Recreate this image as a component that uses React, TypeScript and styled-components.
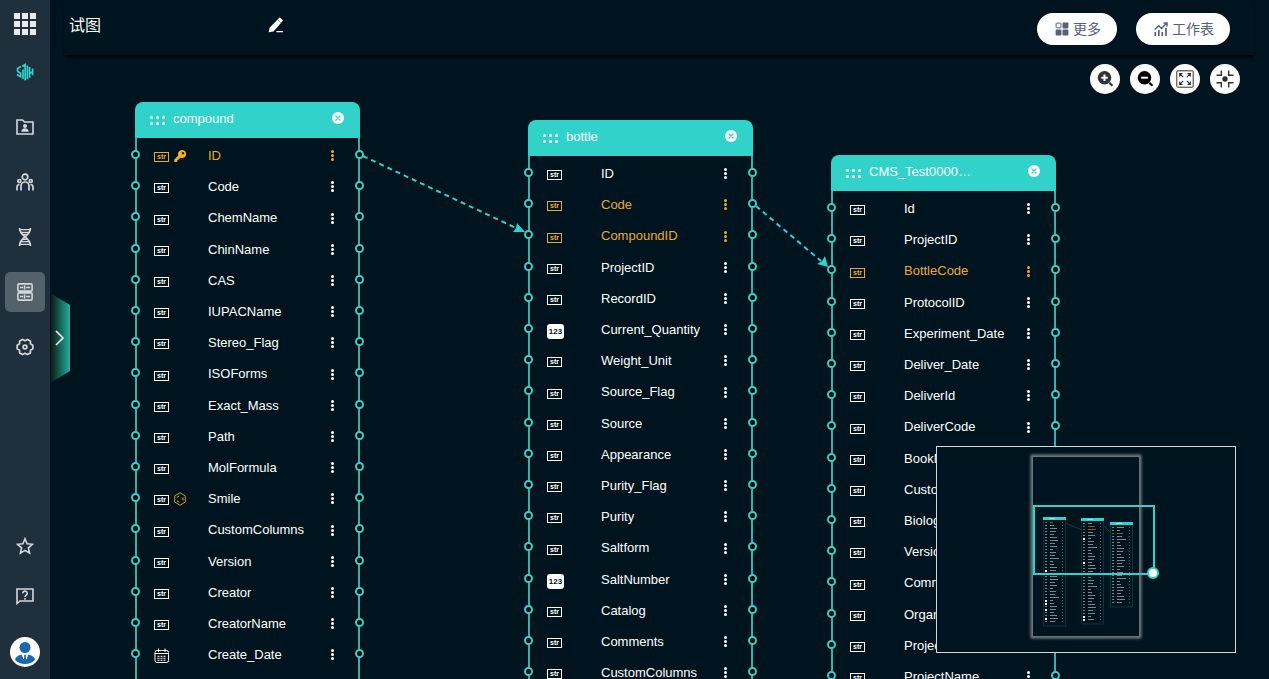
import React from "react";
import styled, { createGlobalStyle, css } from "styled-components";

const teal = "#30d2c9";
const ink = "#001420";
const amber = "#eea92c";

const GlobalStyle = createGlobalStyle`
  * { box-sizing: border-box; }
  html, body, #root { height: 100%; }
  body {
    margin: 0;
    background: ${ink};
    color: #fff;
    font-family: "Liberation Sans", Arial, "Noto Sans CJK SC", sans-serif;
    font-size: 13px;
    overflow: hidden;
  }
  button { font: inherit; color: inherit; border: 0; padding: 0; background: none; cursor: pointer; }
  ul { list-style: none; margin: 0; padding: 0; }
  svg { display: block; }
`;

const Shell = styled.div`
  display: flex;
  height: 100%;
`;

const Sidebar = styled.aside`
  flex: none;
  width: 50px;
  height: 100%;
  padding: 11px 0 12px;
  display: flex;
  flex-direction: column;
  justify-content: space-between;
  align-items: center;
  background: #1f2f3b;
`;

const Nav = styled.nav<{ $gap: number }>`
  display: flex;
  flex-direction: column;
  align-items: center;
  gap: ${(p) => p.$gap}px;
`;

const AppsButton = styled.button`
  display: grid;
  place-items: center;
  width: 40px;
  height: 26px;
`;

const NavButton = styled.button<{ $active?: boolean }>`
  display: grid;
  place-items: center;
  width: 40px;
  height: 40px;
  border-radius: 5px;
  color: #d5d9dc;
  background: ${(p) => (p.$active ? "#53616a" : "transparent")};
`;

const Avatar = styled.button`
  width: 30px;
  height: 30px;
  margin-top: 11px;
  border-radius: 50%;
  overflow: hidden;
  background: #fff;
`;

const Main = styled.main`
  position: relative;
  flex: 1;
  min-width: 0;
  display: flex;
  flex-direction: column;
`;

const Header = styled.header`
  flex: none;
  height: 55px;
  margin: 0 14px;
  padding: 2px 25px 0 5px;
  display: flex;
  align-items: center;
  box-shadow: 0 3px 3px -1px #000;
`;

const Title = styled.h1`
  margin: 0;
  width: 199px;
  padding-bottom: 6px;
  font-size: 16px;
  line-height: 24px;
  font-weight: 400;
`;

const EditButton = styled.button`
  width: 16px;
  height: 24px;
  margin-bottom: 8px;
  display: grid;
  place-items: center;
`;

const Actions = styled.div`
  margin-left: auto;
  display: flex;
  gap: 19px;
`;

const PillButton = styled.button`
  display: flex;
  align-items: center;
  gap: 4px;
  height: 32px;
  padding: 1px 16px 0 18px;
  border-radius: 16px;
  background: #fff;
  color: #5b6074;
  font-size: 14px;
  line-height: 20px;
`;

const Canvas = styled.section`
  position: relative;
  flex: 1;
  min-height: 0;
  overflow: hidden;
`;

const Tools = styled.div`
  position: absolute;
  z-index: 2;
  top: 9px;
  right: 29px;
  display: flex;
  gap: 10px;
`;

const ToolButton = styled.button`
  display: grid;
  place-items: center;
  width: 30px;
  height: 30px;
  border-radius: 50%;
  background: #fff;
  color: #303133;
`;

const DrawerHandle = styled.button`
  position: absolute;
  z-index: 3;
  left: 0;
  top: 293px;
  width: 20px;
  height: 90px;
  display: grid;
  place-items: center;
  background: linear-gradient(90deg, #0a120f, #1fb19f);
  clip-path: polygon(0 0, 100% 12px, 100% 78px, 0 100%);
`;

const Links = styled.svg`
  position: absolute;
  inset: 0;
  width: 100%;
  height: 100%;
  z-index: 1;
  pointer-events: none;
`;

const Node = styled.article`
  position: absolute;
  width: 225px;
`;

const NodeHead = styled.header`
  display: flex;
  align-items: center;
  height: 36px;
  padding: 0 16px 0 15px;
  border-radius: 8px 8px 0 0;
  background: ${teal};
`;

const NodeTitle = styled.h2`
  flex: 1;
  min-width: 0;
  margin: 0 0 3px 8px;
  font-size: 13px;
  line-height: 18px;
  font-weight: 400;
`;

const CloseButton = styled.button`
  margin-bottom: 4px;
`;

const Fields = styled.ul`
  margin: 0;
  padding: 2px 0 120px;
  border: solid #3fada7;
  border-width: 0 2px;
`;

const Field = styled.li<{ $linked?: boolean }>`
  position: relative;
  display: flex;
  align-items: center;
  height: 31px;
  padding: 0 23px 0 17px;
  color: ${(p) => (p.$linked ? amber : "#fff")};
  &:nth-child(5n + 3) { height: 32px; }
`;

const Types = styled.span`
  display: flex;
  align-items: center;
  gap: 5px;
  width: 54px;
  height: 16px;
  margin-top: 3px;
`;

const Extra = styled.span`
  padding-bottom: 2px;
`;

const StrTag = styled.span`
  width: 15px;
  height: 10px;
  border: 1px solid currentColor;
  font-size: 7px;
  line-height: 7px;
  font-weight: 700;
  text-align: center;
`;

const NumTag = styled.span`
  width: 17px;
  height: 15px;
  border-radius: 3px;
  background: #fff;
  color: ${ink};
  font-size: 8px;
  line-height: 15px;
  font-weight: 700;
  text-align: center;
`;

const FieldName = styled.span`
  flex: 1;
  line-height: 18px;
`;

const MenuButton = styled.button`
  width: 6px;
  height: 12px;
  display: grid;
  place-items: center;
`;

const portSide = { left: css`left: -6px;`, right: css`right: -6px;` };

const Port = styled.i<{ $side: "left" | "right" }>`
  position: absolute;
  top: 10px;
  ${(p) => portSide[p.$side]}
  width: 9px;
  height: 9px;
  border: 2px solid ${teal};
  border-radius: 50%;
  background: #000;
  z-index: 2;
`;

const MiniMap = styled.div`
  position: absolute;
  z-index: 4;
  right: 33px;
  bottom: 26px;
  width: 300px;
  height: 207px;
  border: 1px solid #d4d8da;
  background: ${ink};
`;

type Kind = "str" | "key" | "smile" | "num" | "date";
type FieldDef = [name: string, kind?: Kind, linked?: boolean];
type TableDef = { title: string; x: number; y: number; fields: FieldDef[] };

const tables: TableDef[] = [
  {
    title: "compound", x: 85, y: 47,
    fields: [
      ["ID", "key", true], ["Code"], ["ChemName"], ["ChinName"], ["CAS"], ["IUPACName"],
      ["Stereo_Flag"], ["ISOForms"], ["Exact_Mass"], ["Path"], ["MolFormula"], ["Smile", "smile"],
      ["CustomColumns"], ["Version"], ["Creator"], ["CreatorName"], ["Create_Date", "date"],
    ],
  },
  {
    title: "bottle", x: 478, y: 65,
    fields: [
      ["ID"], ["Code", "str", true], ["CompoundID", "str", true], ["ProjectID"], ["RecordID"],
      ["Current_Quantity", "num"], ["Weight_Unit"], ["Source_Flag"], ["Source"], ["Appearance"],
      ["Purity_Flag"], ["Purity"], ["Saltform"], ["SaltNumber", "num"], ["Catalog"], ["Comments"],
      ["CustomColumns"],
    ],
  },
  {
    title: "CMS_Test0000…", x: 781, y: 100,
    fields: [
      ["Id"], ["ProjectID"], ["BottleCode", "str", true], ["ProtocolID"], ["Experiment_Date"],
      ["Deliver_Date"], ["DeliverId"], ["DeliverCode"], ["BookName"], ["CustomColumns"],
      ["Biological"], ["Version"], ["Comments"], ["Organism"], ["ProjectCode"], ["ProjectName"],
    ],
  },
];

const Dots = ({ cols, rows, step, size }: { cols: number; rows: number; step: number; size: number }) => (
  <svg width={(cols - 1) * step + size} height={(rows - 1) * step + size} fill="currentColor" aria-hidden="true">
    {Array.from({ length: cols * rows }, (_, i) => (
      <circle key={i} cx={(i % cols) * step + size / 2} cy={Math.floor(i / cols) * step + size / 2} r={size / 2} />
    ))}
  </svg>
);

const KeyIcon = () => (
  <svg width="12" height="12" viewBox="0 0 12 12" aria-hidden="true">
    <path fill="#f5b01e" fillRule="evenodd" d="M8 0a4 4 0 1 1-1.300 7.700L5.600 8.800H4.600V10H3.400V11.200L2.600 12H.2V9.700L4.300 5.500A4 4 0 0 1 8 0ZM9 1.900a1.200 1.200 0 1 0 .01 0Z" />
  </svg>
);

const SmileIcon = () => (
  <svg width="12" height="14" viewBox="0 0 12 14" fill="none" stroke="#dd9a1d" aria-hidden="true">
    <path d="M6 .8 11.300 3.900v6.200L6 13.200.7 10.100V3.900ZM2.800 5.500 5.400 3.900M2.800 8.700 5.400 10.300M9 5.500v3" />
  </svg>
);

const CalendarIcon = () => (
  <svg width="16" height="16" viewBox="0 0 16 16" fill="none" stroke="currentColor" aria-hidden="true">
    <rect x="1" y="2.500" width="13.500" height="12" rx="2" />
    <path d="M4.500.5v3.500M11 .5v3.500M1 5.500h13.500" />
    <path strokeDasharray="2 1" d="M3.500 8.300h9M3.500 10.300h9M3.500 12.300h9" />
  </svg>
);

const CloseIcon = () => (
  <svg width="12" height="12" viewBox="0 0 12 12" aria-hidden="true">
    <circle cx="6" cy="6" r="6" fill="#fff" />
    <path d="M4 4l4 4M8 4l-4 4" stroke={teal} strokeWidth="1.300" strokeLinecap="round" />
  </svg>
);

function TypeIcons({ kind = "str" }: { kind?: Kind }) {
  if (kind === "num") return <NumTag>123</NumTag>;
  if (kind === "date") return <CalendarIcon />;
  return (
    <>
      <StrTag>str</StrTag>
      {kind === "key" && <Extra><KeyIcon /></Extra>}
      {kind === "smile" && <Extra><SmileIcon /></Extra>}
    </>
  );
}

function TableNode({ table }: { table: TableDef }) {
  return (
    <Node style={{ left: table.x, top: table.y }}>
      <NodeHead>
        <Dots cols={3} rows={2} step={6} size={3} />
        <NodeTitle>{table.title}</NodeTitle>
        <CloseButton aria-label="关闭"><CloseIcon /></CloseButton>
      </NodeHead>
      <Fields>
        {table.fields.map(([name, kind, linked]) => (
          <Field key={name} $linked={linked}>
            <Port $side="left" />
            <Types><TypeIcons kind={kind} /></Types>
            <FieldName>{name}</FieldName>
            <MenuButton aria-label={name}><Dots cols={1} rows={3} step={4} size={3} /></MenuButton>
            <Port $side="right" />
          </Field>
        ))}
      </Fields>
    </Node>
  );
}

const AppsIcon = () => (
  <svg width="22" height="22" fill="#e8eaec" aria-hidden="true">
    {[0, 8, 16].map((y) => [0, 8, 16].map((x) => <rect key={`${x}-${y}`} x={x} y={y} width="6" height="6" />))}
  </svg>
);

const LogoIcon = () => (
  <svg width="18" height="18" viewBox="0 0 18 18" fill="none" stroke={teal} strokeWidth="1.700" aria-hidden="true">
    <path d="M5 3.600 1.600 5.500v3L4.600 10.300v3.500L1 11.500M7 16V6.500M6.300 3.300 9.200 1.600v15.900M11.400 16.300V2.600M13.600 4v10.800M16.600 5.500v3L13.600 10.600M16.600 8.500v3.800" />
  </svg>
);

const FolderIcon = () => (
  <svg width="18" height="16" viewBox="0 0 18 16" aria-hidden="true">
    <path d="M1 1h5.500l2 2H17v12H1Z" fill="none" stroke="currentColor" strokeWidth="1.600" />
    <circle cx="9" cy="6.900" r="2" fill="currentColor" />
    <path d="M5.300 12.800c0-2.400 1.700-3.600 3.700-3.600s3.700 1.200 3.700 3.600Z" fill="currentColor" />
  </svg>
);

const PeopleIcon = () => (
  <svg width="18" height="18" viewBox="0 0 18 18" fill="none" stroke="currentColor" strokeWidth="1.700" aria-hidden="true">
    <circle cx="9" cy="4" r="2.800" />
    <circle cx="3.300" cy="8" r="1.500" />
    <circle cx="14.700" cy="8" r="1.500" />
    <path d="M5 17.500V13a4 4 0 0 1 8 0v4.500M1 17.500v-3.300a2.700 2.700 0 0 1 2.500-2.700M17 17.500v-3.300a2.700 2.700 0 0 0-2.500-2.700" />
  </svg>
);

const DnaIcon = () => (
  <svg width="14" height="18" viewBox="0 0 14 18" fill="none" stroke="currentColor" aria-hidden="true">
    <path strokeWidth="1.700" d="M1.500 0C1.500 9 12.500 8.500 12.500 18M12.500 0C12.500 9 1.500 8.500 1.500 18" />
    <path strokeWidth="1.200" d="M2 1.700h10M3 4.300h8M5 6.400h4M5 11.300h4M3 13.700h8M2 16.300h10" />
  </svg>
);

const StoreIcon = () => (
  <svg width="16" height="18" viewBox="0 0 16 18" fill="none" stroke="currentColor" aria-hidden="true">
    <rect x=".9" y=".9" width="14.200" height="7.200" rx="1.200" strokeWidth="1.600" />
    <rect x=".9" y="9.900" width="14.200" height="7.200" rx="1.200" strokeWidth="1.600" />
    <path strokeWidth="1.500" d="M3 4.500h3M7.500 2.500v4M9 4.500h4M3 13.500h3M7.500 11.500v4M9 13.500h4" />
  </svg>
);

// Six lobes around the centre, with a notch between each pair.
const gearPoints = Array.from({ length: 6 }, (_, i) =>
  [[-12, 8], [12, 8], [30, 6.3]].map(([turn, r]) => {
    const a = ((i * 60 + turn) * Math.PI) / 180;
    return `${(9 + r * Math.cos(a)).toFixed(2)},${(9 + r * Math.sin(a)).toFixed(2)}`;
  }).join(" ")
).join(" ");

const GearIcon = () => (
  <svg width="18" height="18" viewBox="0 0 18 18" fill="none" stroke="currentColor" strokeWidth="1.700" strokeLinejoin="round" aria-hidden="true">
    <polygon points={gearPoints} />
    <circle cx="9" cy="9" r="1.900" />
  </svg>
);

const StarIcon = () => (
  <svg width="18" height="18" viewBox="0 0 18 18" fill="none" stroke="currentColor" strokeWidth="1.600" aria-hidden="true">
    <path d="m9 1.800 2.100 5 5.400.5-4.100 3.600 1.200 5.300L9 13.400l-4.600 2.800 1.200-5.300L1.500 7.300l5.400-.5Z" />
  </svg>
);

const HelpIcon = () => (
  <svg width="18" height="17" viewBox="0 0 18 17" fill="none" stroke="currentColor" strokeWidth="1.600" aria-hidden="true">
    <path d="M1 1h16v12H4L1 15.500Z" />
    <path d="M6.800 5.400a2.200 2.200 0 1 1 3.600 1.600C9.500 7.600 9 7.900 9 9M9 10v1.800" />
  </svg>
);

const AvatarIcon = () => (
  <svg width="30" height="30" viewBox="0 0 30 30" aria-hidden="true">
    <circle cx="15" cy="10.500" r="5.500" fill="#1b68ad" />
    <path d="M5 23c.5-3.600 4-5.500 10-5.500S24.500 19.400 25 23c-2.500 2.600-6 4-10 4S7.500 25.600 5 23Z" fill="#1b68ad" />
    <path d="m11.500 17 2 5.500 1.500-3 1.500 3 2-5.500Z" fill="#fff" />
    <path d="m15 17.500 1 1-.5 4h-1l-.5-4Z" fill="#1b68ad" />
  </svg>
);

const PencilIcon = () => (
  <svg width="16" height="16" viewBox="0 0 16 16" aria-hidden="true">
    <path fill="#fff" d="M11.300.8c.3-.3.700-.3 1 0l2.400 2.300c.3.300.3.700 0 1L5.500 14.500.7 15.300l.8-4.500Z" />
    <path stroke="#7f8990" strokeWidth=".7" d="m9.600 2.700 3.500 3.300" />
    <path stroke="#fff" strokeWidth="1.300" d="M8.500 14.600H15" />
  </svg>
);

const MoreIcon = () => (
  <svg width="14" height="14" viewBox="0 0 14 14" fill="currentColor" aria-hidden="true">
    <rect x="1.100" y="1.100" width="4.800" height="4.800" rx=".7" fill="none" stroke="currentColor" />
    <rect x="7.500" y=".6" width="5.900" height="5.900" rx="1" />
    <rect x=".6" y="7.500" width="5.900" height="5.900" rx="1" />
    <rect x="7.500" y="7.500" width="5.900" height="5.900" rx="1" />
  </svg>
);

const ChartIcon = () => (
  <svg width="14" height="14" viewBox="0 0 14 14" fill="none" stroke="currentColor" aria-hidden="true">
    <path strokeWidth="1.700" d="M1.300 14v-4M4.800 14V8M8.300 14v-4M12 14V6" />
    <path strokeWidth="1.500" d="m.7 7.500 4-3.700L7.500 6.500 12.500 1.300M9.500 1h3.500v3.400" />
  </svg>
);

const ZoomIcon = ({ plus }: { plus?: boolean }) => (
  <svg width="18" height="18" viewBox="0 0 18 18" aria-hidden="true">
    <circle cx="8.500" cy="7.700" r="6.800" fill={plus ? "#333" : "#000"} />
    <path d={plus ? "M5.300 7.700h6.400M8.500 4.500v6.400" : "M5.100 7.700h6.800"} stroke="#fff" strokeWidth="2" />
    <path d="m13.300 12.800 3.200 3" stroke={plus ? "#333" : "#000"} strokeWidth="2.200" />
  </svg>
);

const FitIcon = () => (
  <svg width="18" height="18" viewBox="0 0 18 18" fill="none" stroke="currentColor" aria-hidden="true">
    <rect x=".8" y=".8" width="16.400" height="16.400" rx="1" />
    <path strokeWidth="1.200" d="M3.700 6.500V3.700h2.800M3.700 3.700l3.500 3.500M14.300 6.500V3.700h-2.800M14.300 3.700l-3.500 3.500M3.700 11.500v2.800h2.800M3.700 14.300l3.500-3.500M14.300 11.500v2.800h-2.800M14.300 14.300l-3.500-3.500" />
  </svg>
);

const CenterIcon = () => (
  <svg width="18" height="18" viewBox="0 0 18 18" fill="none" stroke="currentColor" strokeWidth="1.400" aria-hidden="true">
    <path d="M5.300.5v4.800H.5M12.700.5v4.800h4.800M5.300 17.500v-4.800H.5M12.700 17.500v-4.800h4.800" />
    <circle cx="9" cy="9" r="2.700" fill="currentColor" stroke="none" />
  </svg>
);

const navItems = [
  { label: "首页", icon: <LogoIcon /> },
  { label: "项目", icon: <FolderIcon /> },
  { label: "团队", icon: <PeopleIcon /> },
  { label: "基因", icon: <DnaIcon /> },
  { label: "数据", icon: <StoreIcon />, active: true },
  { label: "设置", icon: <GearIcon /> },
];

const miniTables = [
  { x: 107, y: 71, rows: 36, marks: [16, 26, 27, 29, 32] },
  { x: 145, y: 72, rows: 35, marks: [5, 13, 31, 32] },
  { x: 174, y: 76, rows: 28, marks: [] as number[] },
];
const barWidths = [3, 4, 7, 6, 4, 7, 8, 5, 7, 3, 6, 5, 9];

const MiniDrawing = () => (
  <svg width="298" height="205" aria-hidden="true">
    <defs>
      <filter id="glow" x="-10%" y="-10%" width="120%" height="120%">
        <feGaussianBlur stdDeviation="1.500" />
      </filter>
    </defs>
    <rect x="95" y="9" width="108" height="181" fill="none" stroke="#a9b0b4" strokeWidth="2" filter="url(#glow)" />
    <rect x="95.500" y="9.500" width="107" height="180" fill={ink} stroke="#6b757b" />
    <path d="M128 76 145 83M167 79 174 86" stroke="#0e3f44" />
    {miniTables.map((t, n) => (
      <g key={n}>
        <rect x={t.x - 0.5} y={t.y} width="22" height={t.rows * 3} fill="none" stroke="#0c353b" />
        <rect x={t.x - 1} y={t.y - 1} width="23" height="3" fill={teal} />
        <rect x={t.x + 5} y={t.y} width="6" height="1" fill="#8ce6e1" />
        {Array.from({ length: t.rows - 2 }, (_, i) => {
          const hot = (n === 0 && i === 0) || (n === 1 && (i === 1 || i === 2)) || (n === 2 && i === 2);
          return (
            <g key={i} fill={hot ? "#8a5a22" : "#7b858c"}>
              <rect x={t.x + 1} y={t.y + 4 + i * 3} width="2" height={t.marks.includes(i) ? 2 : 1} fill={t.marks.includes(i) ? "#fff" : undefined} />
              <rect x={t.x + 6} y={t.y + 4 + i * 3} width={barWidths[(i + n * 4) % 13]} height="1" />
              <rect x={t.x + 18} y={t.y + 4 + i * 3} width="1" height="1" opacity=".7" />
            </g>
          );
        })}
      </g>
    ))}
    <rect x="97" y="59" width="120" height="68" fill="none" stroke={teal} strokeWidth="2" />
    <circle cx="216" cy="126" r="5" fill="#fff" stroke={teal} strokeWidth="2" />
  </svg>
);

export default function App() {
  return (
    <>
      <GlobalStyle />
      <Shell>
        <Sidebar>
          <Nav $gap={15}>
            <AppsButton aria-label="应用"><AppsIcon /></AppsButton>
            {navItems.map((item) => (
              <NavButton key={item.label} aria-label={item.label} $active={item.active}>{item.icon}</NavButton>
            ))}
          </Nav>
          <Nav $gap={10}>
            <NavButton aria-label="收藏"><StarIcon /></NavButton>
            <NavButton aria-label="帮助"><HelpIcon /></NavButton>
            <Avatar aria-label="账户"><AvatarIcon /></Avatar>
          </Nav>
        </Sidebar>
        <Main>
          <DrawerHandle aria-label="展开">
            <svg width="10" height="16" fill="none" stroke="#fff" strokeWidth="1.500" aria-hidden="true">
              <path d="m1 1 7 7-7 7" />
            </svg>
          </DrawerHandle>
          <Header>
            <Title>试图</Title>
            <EditButton aria-label="编辑"><PencilIcon /></EditButton>
            <Actions>
              <PillButton><MoreIcon />更多</PillButton>
              <PillButton><ChartIcon />工作表</PillButton>
            </Actions>
          </Header>
          <Canvas>
            {tables.map((t) => <TableNode key={t.title} table={t} />)}
            <Links aria-hidden="true">
              <g stroke={teal} strokeWidth="2" strokeDasharray="5 4">
                <path d="M313 101 466 173M706 151 771 206" />
              </g>
              <path fill={teal} d="M475 177 467 168 466 173 463 177ZM778 212 775 201 772 206 767 209Z" />
            </Links>
            <Tools>
              <ToolButton aria-label="放大"><ZoomIcon plus /></ToolButton>
              <ToolButton aria-label="缩小"><ZoomIcon /></ToolButton>
              <ToolButton aria-label="适应"><FitIcon /></ToolButton>
              <ToolButton aria-label="居中"><CenterIcon /></ToolButton>
            </Tools>
            <MiniMap><MiniDrawing /></MiniMap>
          </Canvas>
        </Main>
      </Shell>
    </>
  );
}
